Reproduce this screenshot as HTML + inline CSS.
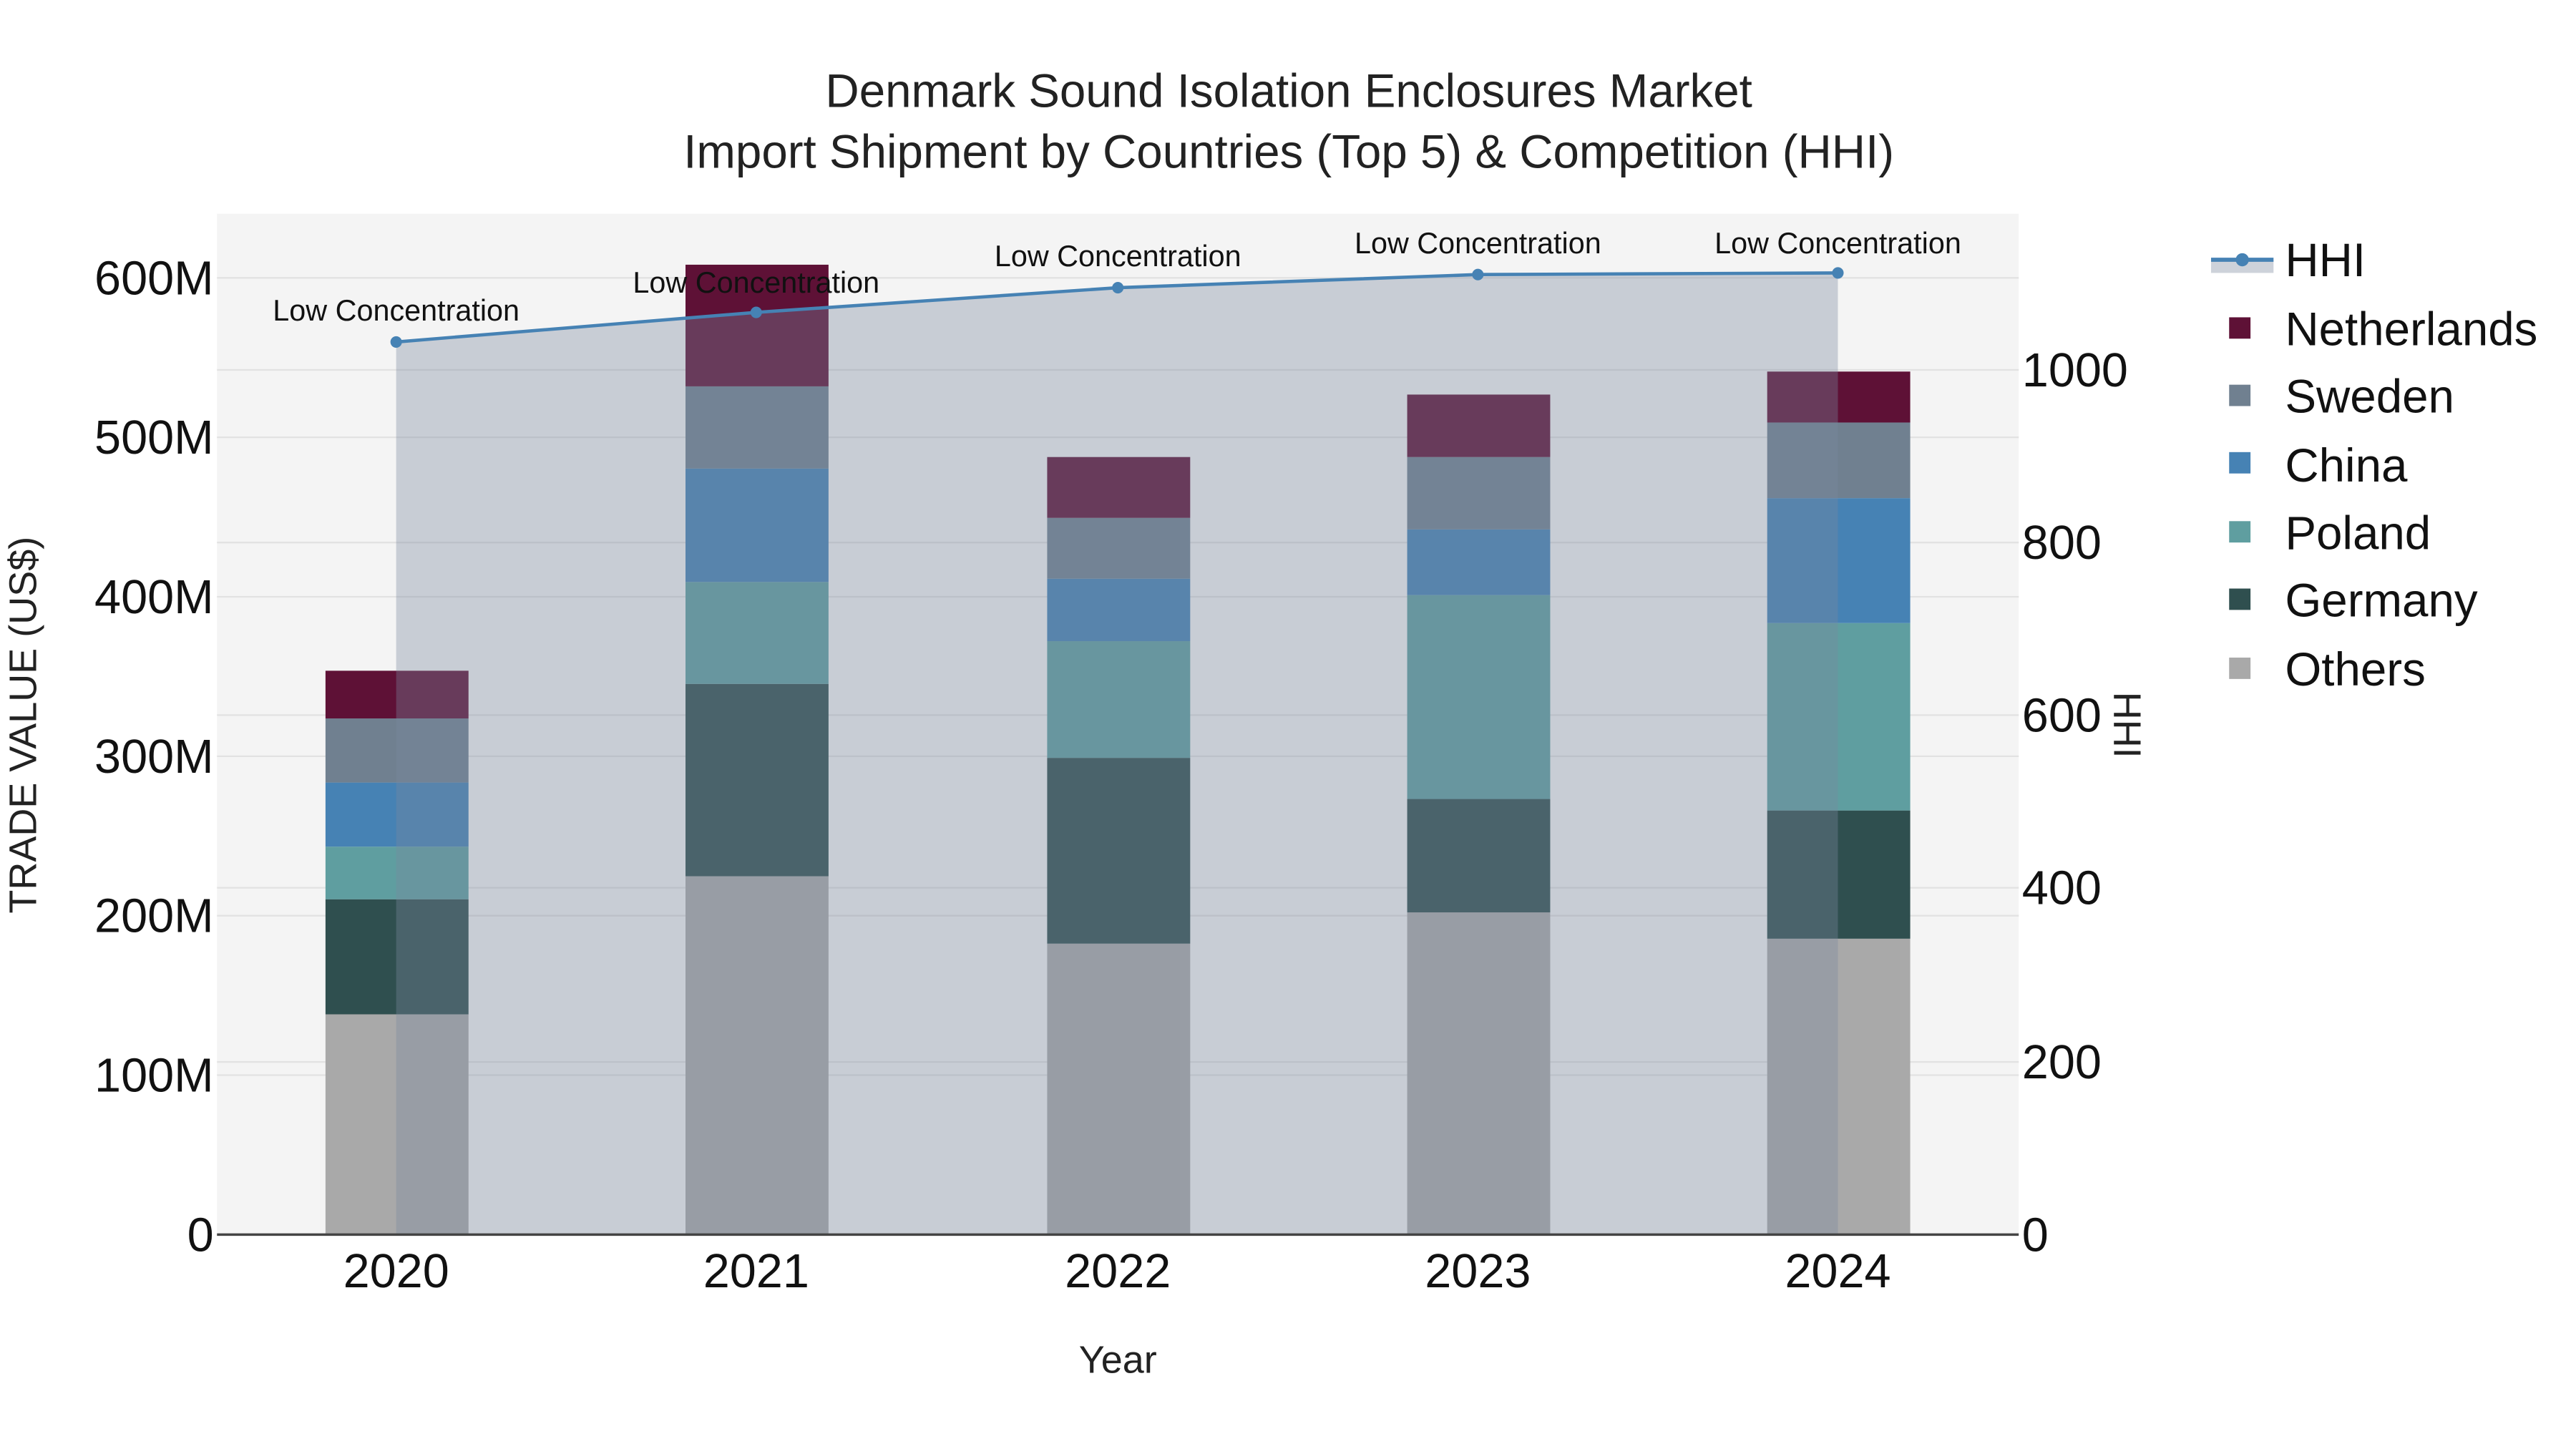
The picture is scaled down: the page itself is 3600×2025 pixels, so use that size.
<!DOCTYPE html>
<html><head><meta charset="utf-8"><style>
html,body{margin:0;padding:0;background:#fff;}
svg{display:block;font-family:"Liberation Sans",sans-serif;}
</style></head><body>
<svg width="3600" height="2025" viewBox="0 0 1567 881.4" xmlns="http://www.w3.org/2000/svg">
<rect x="0" y="0" width="1567" height="881.4" fill="#fff"/>
<rect x="132" y="130" width="1096" height="621" fill="#f4f4f4"/>
<g stroke="#e2e2e2" stroke-width="1">
<line x1="132" x2="1228" y1="169" y2="169"/><line x1="132" x2="1228" y1="266" y2="266"/>
<line x1="132" x2="1228" y1="363" y2="363"/><line x1="132" x2="1228" y1="460" y2="460"/>
<line x1="132" x2="1228" y1="557" y2="557"/><line x1="132" x2="1228" y1="654" y2="654"/>
<line x1="132" x2="1228" y1="225" y2="225"/><line x1="132" x2="1228" y1="330" y2="330"/>
<line x1="132" x2="1228" y1="435" y2="435"/><line x1="132" x2="1228" y1="540" y2="540"/>
<line x1="132" x2="1228" y1="646" y2="646"/>
</g>
<g>
<rect x="198" y="617" width="87" height="134" fill="#a9a9a9"/>
<rect x="198" y="547" width="87" height="70" fill="#2f4f4f"/>
<rect x="198" y="515" width="87" height="32" fill="#5f9ea0"/>
<rect x="198" y="476" width="87" height="39" fill="#4682b4"/>
<rect x="198" y="437" width="87" height="39" fill="#708090"/>
<rect x="198" y="408" width="87" height="29" fill="#5e1136"/>
<rect x="417" y="533" width="87" height="218" fill="#a9a9a9"/>
<rect x="417" y="416" width="87" height="117" fill="#2f4f4f"/>
<rect x="417" y="354" width="87" height="62" fill="#5f9ea0"/>
<rect x="417" y="285" width="87" height="69" fill="#4682b4"/>
<rect x="417" y="235" width="87" height="50" fill="#708090"/>
<rect x="417" y="161" width="87" height="74" fill="#5e1136"/>
<rect x="637" y="574" width="87" height="177" fill="#a9a9a9"/>
<rect x="637" y="461" width="87" height="113" fill="#2f4f4f"/>
<rect x="637" y="390" width="87" height="71" fill="#5f9ea0"/>
<rect x="637" y="352" width="87" height="38" fill="#4682b4"/>
<rect x="637" y="315" width="87" height="37" fill="#708090"/>
<rect x="637" y="278" width="87" height="37" fill="#5e1136"/>
<rect x="856" y="555" width="87" height="196" fill="#a9a9a9"/>
<rect x="856" y="486" width="87" height="69" fill="#2f4f4f"/>
<rect x="856" y="362" width="87" height="124" fill="#5f9ea0"/>
<rect x="856" y="322" width="87" height="40" fill="#4682b4"/>
<rect x="856" y="278" width="87" height="44" fill="#708090"/>
<rect x="856" y="240" width="87" height="38" fill="#5e1136"/>
<rect x="1075" y="571" width="87" height="180" fill="#a9a9a9"/>
<rect x="1075" y="493" width="87" height="78" fill="#2f4f4f"/>
<rect x="1075" y="379" width="87" height="114" fill="#5f9ea0"/>
<rect x="1075" y="303" width="87" height="76" fill="#4682b4"/>
<rect x="1075" y="257" width="87" height="46" fill="#708090"/>
<rect x="1075" y="226" width="87" height="31" fill="#5e1136"/>
</g>
<path d="M241,208 L460,190 L680,175 L899,167 L1118,166 L1118,751 L241,751 Z" fill="rgb(122,136,158)" fill-opacity="0.36"/>
<polyline points="241,208 460,190 680,175 899,167 1118,166" fill="none" stroke="#4682b4" stroke-width="2"/>
<g fill="#4682b4">
<circle cx="241" cy="208" r="3.5"/><circle cx="460" cy="190" r="3.5"/><circle cx="680" cy="175" r="3.5"/><circle cx="899" cy="167" r="3.5"/><circle cx="1118" cy="166" r="3.5"/>
</g>
<line x1="132" x2="1228" y1="751" y2="751" stroke="#444" stroke-width="1.5"/>
<g font-size="18" fill="#111" text-anchor="middle">
<text x="241" y="195">Low Concentration</text>
<text x="460" y="178">Low Concentration</text>
<text x="680" y="162">Low Concentration</text>
<text x="899" y="154">Low Concentration</text>
<text x="1118" y="154">Low Concentration</text>
</g>
<g fill="#222" text-anchor="middle" font-size="28.5">
<text x="784" y="65">Denmark Sound Isolation Enclosures Market</text>
<text x="784" y="102">Import Shipment by Countries (Top 5) &amp; Competition (HHI)</text>
</g>
<g font-size="29" fill="#111" text-anchor="end">
<text x="130" y="761">0</text><text x="130" y="664">100M</text><text x="130" y="567">200M</text>
<text x="130" y="470">300M</text><text x="130" y="373">400M</text><text x="130" y="276">500M</text><text x="130" y="179">600M</text>
</g>
<g font-size="29" fill="#111" text-anchor="start">
<text x="1230" y="761">0</text><text x="1230" y="656">200</text><text x="1230" y="550">400</text>
<text x="1230" y="445">600</text><text x="1230" y="340">800</text><text x="1230" y="235">1000</text>
</g>
<g font-size="29" fill="#111" text-anchor="middle">
<text x="241" y="783">2020</text><text x="460" y="783">2021</text><text x="680" y="783">2022</text><text x="899" y="783">2023</text><text x="1118" y="783">2024</text>
</g>
<text x="680" y="835" font-size="23.5" fill="#222" text-anchor="middle">Year</text>
<text transform="translate(22,441) rotate(-90)" font-size="23.5" fill="#222" text-anchor="middle">TRADE VALUE (US$)</text>
<text transform="translate(1286,441) rotate(90)" font-size="23.5" fill="#222" text-anchor="middle">HHI</text>
<rect x="1345" y="158" width="38" height="8" fill="#cdd2da"/>
<line x1="1345" x2="1383" y1="158" y2="158" stroke="#4682b4" stroke-width="2.5"/>
<circle cx="1364" cy="158" r="4" fill="#4682b4"/>
<g font-size="28.5" fill="#111">
<text x="1390" y="168">HHI</text>
<text x="1390" y="210">Netherlands</text>
<text x="1390" y="251">Sweden</text>
<text x="1390" y="293">China</text>
<text x="1390" y="334">Poland</text>
<text x="1390" y="375">Germany</text>
<text x="1390" y="417">Others</text>
</g>
<rect x="1356" y="193" width="13" height="13" fill="#5e1136"/>
<rect x="1356" y="234" width="13" height="13" fill="#708090"/>
<rect x="1356" y="275" width="13" height="13" fill="#4682b4"/>
<rect x="1356" y="317" width="13" height="13" fill="#5f9ea0"/>
<rect x="1356" y="358" width="13" height="13" fill="#2f4f4f"/>
<rect x="1356" y="400" width="13" height="13" fill="#a9a9a9"/>
</svg>
</body></html>
